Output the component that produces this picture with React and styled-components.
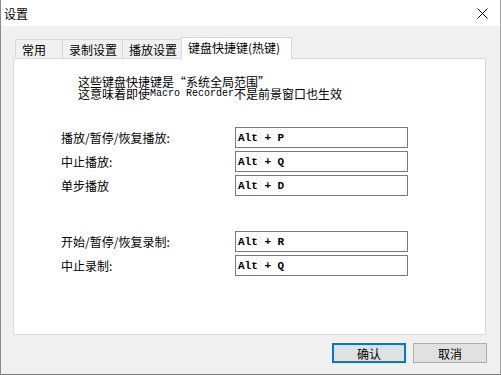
import React from 'react';
import styled, { createGlobalStyle } from 'styled-components';

const GlobalStyle = createGlobalStyle`
  html, body {
    margin: 0;
    padding: 0;
    background: #f0f0f0;
  }
  body {
    font-family: "Noto Sans CJK SC", "Liberation Sans", sans-serif;
    font-size: 12px;
    color: #000;
  }
`;

const Window = styled.div`
  width: 501px;
  height: 375px;
  box-sizing: border-box;
  background: #f0f0f0;
  border-left: 1px solid #8a8a8a;
  border-right: 1px solid #a0a0a0;
  border-bottom: 1px solid #7a7a7a;
  display: flex;
  flex-direction: column;
`;

const TitleBar = styled.div`
  height: 26px;
  background: #fff;
  display: flex;
  align-items: center;
  justify-content: space-between;
  padding: 0 12px 0 3px;
  font-size: 12px;
  flex-shrink: 0;
`;

const Body = styled.div`
  padding: 11px 0 0 12px;
  display: flex;
  flex-direction: column;
`;

const TabRow = styled.div`
  display: flex;
  align-items: flex-end;
  height: 21px;
  padding-left: 2px;
  position: relative;
  z-index: 1;
`;

const Tab = styled.div`
  box-sizing: border-box;
  width: ${p => p.w}px;
  height: ${p => (p.active ? 22 : 19)}px;
  margin-bottom: ${p => (p.active ? -1 : 0)}px;
  border: 1px solid #d9d9d9;
  border-bottom: none;
  border-right: ${p => (p.last ? '1px solid #d9d9d9' : 'none')};
  background: ${p => (p.active ? '#fff' : '#f0f0f0')};
  display: flex;
  align-items: center;
  padding-left: 6px;
  padding-bottom: ${p => (p.active ? 3 : 0)}px;
  font-size: 12px;
  white-space: nowrap;
`;

const Panel = styled.div`
  box-sizing: border-box;
  width: 473px;
  height: 277px;
  background: #fff;
  border: 1px solid #d9d9d9;
  padding: 17px 0 0 47px;
  display: flex;
  flex-direction: column;
`;

const Notice = styled.div`
  padding-left: 17px;
  display: flex;
  flex-direction: column;
`;

const NoticeLine = styled.div`
  height: 12px;
  display: flex;
  align-items: center;
  white-space: nowrap;
  font-size: 12px;
  line-height: 12px;
`;

const Latin = styled.span`
  font-family: "Liberation Mono", monospace;
  font-size: 10px;
`;

const Group = styled.div`
  display: flex;
  flex-direction: column;
  gap: 3px;
  margin-top: ${p => p.top}px;
`;

const Row = styled.div`
  display: flex;
  align-items: center;
  height: 21px;
`;

const Label = styled.div`
  width: 174px;
  font-size: 12px;
  white-space: nowrap;
`;

const KeyBox = styled.div`
  box-sizing: border-box;
  width: 173px;
  height: 21px;
  border: 1px solid #7a7a7a;
  display: flex;
  align-items: center;
  padding-left: 2px;
  font-family: "Liberation Mono", monospace;
  font-weight: bold;
  font-size: 11px;
  white-space: pre;
`;

const ButtonRow = styled.div`
  display: flex;
  justify-content: flex-end;
  gap: 7px;
  padding: 8px 13px 0 0;
`;

const Button = styled.div`
  box-sizing: border-box;
  width: 74px;
  height: 20px;
  background: #e1e1e1;
  border: ${p => (p.primary ? '2px solid #0078d7' : '1px solid #adadad')};
  display: flex;
  align-items: center;
  justify-content: center;
  font-size: 12px;
`;

const CloseIcon = () => (
  <svg width="11" height="11" viewBox="0 0 11 11">
    <path d="M0.5 0.5 L10.5 10.5 M10.5 0.5 L0.5 10.5" stroke="#000" strokeWidth="1" fill="none" />
  </svg>
);

const tabs = [
  { name: '常用', w: 47 },
  { name: '录制设置', w: 60 },
  { name: '播放设置', w: 59 },
  { name: '键盘快捷键(热键)', w: 111, active: true },
];

const playback = [
  ['播放/暂停/恢复播放:', 'Alt + P'],
  ['中止播放:', 'Alt + Q'],
  ['单步播放', 'Alt + D'],
];

const recording = [
  ['开始/暂停/恢复录制:', 'Alt + R'],
  ['中止录制:', 'Alt + Q'],
];

const App = () => (
  <>
    <GlobalStyle />
    <Window>
      <TitleBar>
        <span>设置</span>
        <CloseIcon />
      </TitleBar>
      <Body>
        <TabRow>
          {tabs.map((t, i) => (
            <Tab key={t.name} w={t.w} active={t.active} last={i === tabs.length - 1}>
              {t.name}
            </Tab>
          ))}
        </TabRow>
        <Panel>
          <Notice>
            <NoticeLine>这些键盘快捷键是“系统全局范围”</NoticeLine>
            <NoticeLine>这意味着即使<Latin>Macro Recorder</Latin>不是前景窗口也生效</NoticeLine>
          </Notice>
          <Group top={27}>
            {playback.map(([label, key]) => (
              <Row key={label}>
                <Label>{label}</Label>
                <KeyBox>{key}</KeyBox>
              </Row>
            ))}
          </Group>
          <Group top={35}>
            {recording.map(([label, key]) => (
              <Row key={label}>
                <Label>{label}</Label>
                <KeyBox>{key}</KeyBox>
              </Row>
            ))}
          </Group>
        </Panel>
        <ButtonRow>
          <Button primary>确认</Button>
          <Button>取消</Button>
        </ButtonRow>
      </Body>
    </Window>
  </>
);

export default App;
